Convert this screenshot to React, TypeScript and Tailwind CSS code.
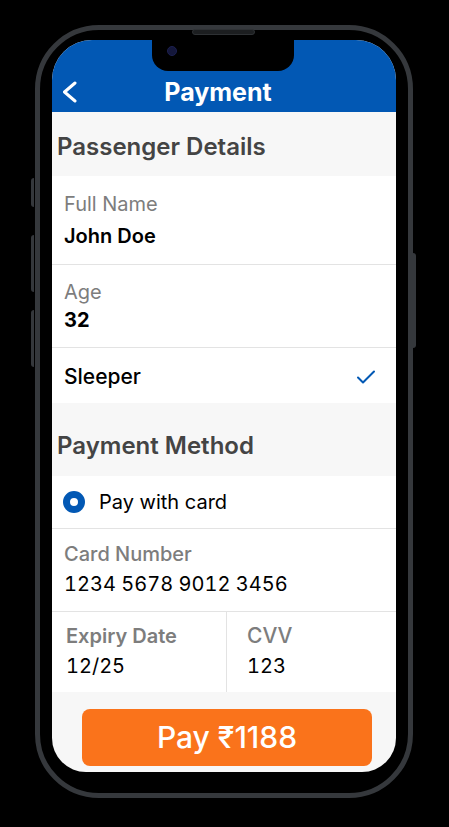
import React from 'react';

const font = { fontFamily: 'Inter, "Noto Sans", sans-serif' };

export default function App() {
    return (
        <div className="w-[449px] h-[827px] bg-black overflow-hidden" style={font}>
            <div className="relative ml-[35px] mt-[25px] w-[378px] h-[773px] rounded-[64px] border-[5px] border-[#35383c] bg-black px-[12px] pt-[10px] pb-[21px]">
                {/* side buttons */}
                <div className="absolute left-[-9px] top-[148px] w-[3px] h-[29px] rounded-l bg-[#35383c]" />
                <div className="absolute left-[-9px] top-[205px] w-[3px] h-[57px] rounded-l bg-[#35383c]" />
                <div className="absolute left-[-9px] top-[280px] w-[3px] h-[57px] rounded-l bg-[#35383c]" />
                <div className="absolute right-[-8px] top-[223px] w-[3px] h-[95px] rounded-r bg-[#35383c]" />
                {/* speaker */}
                <div className="absolute left-[152px] top-[-1px] w-[63px] h-[6px] rounded-full bg-[#1c1e20] border border-[#2e3134]" />

                <div className="relative h-[732px] rounded-t-[40px] rounded-b-[34px] overflow-hidden bg-[#f7f7f7] flex flex-col">
                    {/* notch */}
                    <div className="absolute left-[100px] top-0 w-[142px] h-[31px] bg-black rounded-b-[16px]">
                        <div className="absolute left-[15px] top-[6px] w-[10px] h-[10px] rounded-full bg-[#14173a] border border-[#1d2150]" />
                    </div>

                    <div className="h-[72px] bg-[#0258b4] flex items-center px-[11px] pt-[32px]">
                        <svg width="16" height="24" viewBox="0 0 16 24" fill="none">
                            <polyline points="12,3 1.5,12 12,21" stroke="white" strokeWidth="3" strokeLinecap="round" strokeLinejoin="round" />
                        </svg>
                        <div className="flex-1 text-center mr-[36px] ml-[8px] text-white text-[25px] leading-[32px] font-bold">Payment</div>
                    </div>

                    <div className="pt-[20px] pb-[14px] px-[5px] text-[24px] leading-[30px] font-semibold text-[#444444]">Passenger Details</div>

                    <div className="pt-[16px] pb-[15px] bg-white px-[12px]">
                        <div className="text-[20px] leading-[24px] text-[#7d7d7d]">Full Name</div>
                        <div className="text-[20px] leading-[26px] text-black mt-[7px] font-semibold">John Doe</div>
                    </div>
                    <div className="h-px bg-[#e3e3e3]" />
                    <div className="pt-[15px] pb-[14px] bg-white px-[12px]">
                        <div className="text-[20px] leading-[24px] text-[#7d7d7d]">Age</div>
                        <div className="text-[20px] leading-[26px] text-black mt-[3px] font-bold">32</div>
                    </div>
                    <div className="h-px bg-[#e3e3e3]" />
                    <div className="h-[55px] bg-white px-[12px] pt-[3px] flex items-center justify-between">
                        <span className="text-[21px] font-medium text-black">Sleeper</span>
                        <svg width="20" height="16" viewBox="0 0 20 16" fill="none" className="mr-[8px]">
                            <polyline points="2,8.5 7,13.5 18,2.5" stroke="#0258b4" strokeWidth="2" strokeLinecap="round" strokeLinejoin="round" />
                        </svg>
                    </div>

                    <div className="pt-[28px] pb-[15px] px-[5px] text-[24px] leading-[30px] font-semibold text-[#444444]">Payment Method</div>

                    <div className="h-[52px] bg-white px-[11px] flex items-center gap-[14px]">
                        <div className="w-[22px] h-[22px] rounded-full border-[7px] border-[#0258b4] bg-white" />
                        <span className="text-[20px] text-black">Pay with card</span>
                    </div>
                    <div className="h-px bg-[#e3e3e3]" />
                    <div className="pt-[13px] pb-[14px] bg-white px-[12px]">
                        <div className="text-[20px] leading-[24px] text-[#7d7d7d] font-medium">Card Number</div>
                        <div className="text-[20px] leading-[26px] text-black mt-[5px] tabular-nums">1234 5678 9012 3456</div>
                    </div>
                    <div className="h-px bg-[#e3e3e3]" />
                    <div className="bg-white flex">
                        <div className="w-[175px] border-r border-[#e3e3e3] pt-[12px] pb-[13px] px-[14px]">
                            <div className="text-[20px] leading-[24px] text-[#7d7d7d] font-semibold">Expiry Date</div>
                            <div className="text-[20px] leading-[26px] text-black mt-[5px] tabular-nums">12/25</div>
                        </div>
                        <div className="flex-1 pt-[12px] pb-[13px] px-[20px]">
                            <div className="text-[21px] leading-[24px] text-[#7d7d7d] font-medium">CVV</div>
                            <div className="text-[20px] leading-[26px] text-black mt-[5px] tabular-nums">123</div>
                        </div>
                    </div>

                    <div className="flex-1 pt-[17px] pl-[30px] pr-[24px]">
                        <button className="w-full h-[57px] rounded-[8px] bg-[#fa731b] text-white text-[30px] font-medium flex items-center justify-center">
                            Pay ₹1188
                        </button>
                    </div>
                </div>
            </div>
        </div>
    );
}
